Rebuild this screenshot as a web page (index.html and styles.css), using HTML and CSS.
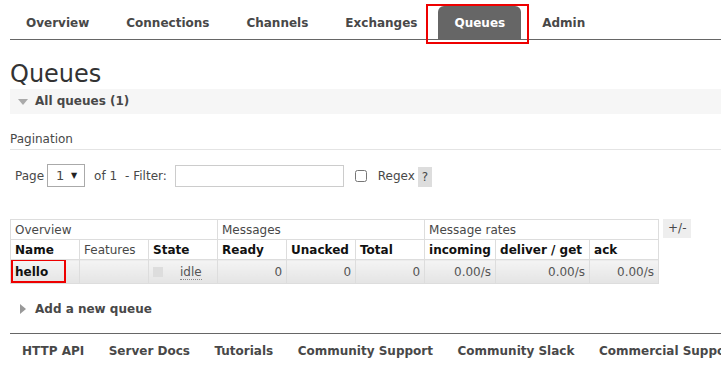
FILE: index.html
```html
<!DOCTYPE html>
<html lang="en">
<head>
  <meta charset="UTF-8">
  <title>RabbitMQ Management</title>
  <link rel="stylesheet" href="styles.css">
</head>
<body>

  <ul class="tabs">
    <li><a href="#">Overview</a></li>
    <li><a href="#">Connections</a></li>
    <li><a href="#">Channels</a></li>
    <li><a href="#">Exchanges</a></li>
    <li class="selected"><a href="#">Queues</a></li>
    <li><a href="#">Admin</a></li>
  </ul>

  <h1>Queues</h1>

  <div class="section open">
    <h2>All queues (1)</h2>
  </div>

  <div class="pagination">
    <h3>Pagination</h3>
    <div class="filter">
      <span>Page</span>
      <span class="select">1 <i>&#9660;</i></span>
      <span class="of">of 1</span>
      <span>- Filter:</span>
      <input type="text" class="filter-input">
      <input type="checkbox" class="regex-box">
      <span>Regex</span>
      <span class="help">?</span>
    </div>
  </div>

  <div class="list-wrap">
    <table class="list">
      <colgroup>
        <col class="c69"><col class="c69"><col class="c69">
        <col class="c69"><col class="c69"><col class="c69">
        <col class="c71"><col class="c94"><col class="c69">
      </colgroup>
      <thead>
        <tr class="group">
          <th colspan="3">Overview</th>
          <th colspan="3">Messages</th>
          <th colspan="3">Message rates</th>
        </tr>
        <tr>
          <th>Name</th>
          <th class="plain">Features</th>
          <th>State</th>
          <th>Ready</th>
          <th>Unacked</th>
          <th>Total</th>
          <th>incoming</th>
          <th>deliver / get</th>
          <th>ack</th>
        </tr>
      </thead>
      <tbody>
        <tr>
          <td class="name"><span class="mark">hello</span></td>
          <td></td>
          <td class="state"><span class="dot"></span><abbr>idle</abbr></td>
          <td class="r">0</td>
          <td class="r">0</td>
          <td class="r">0</td>
          <td class="r">0.00/s</td>
          <td class="r">0.00/s</td>
          <td class="r">0.00/s</td>
        </tr>
      </tbody>
    </table>
    <span class="toggle">+/-</span>
  </div>

  <div class="section closed">
    <h2>Add a new queue</h2>
  </div>

  <ul class="footer">
    <li><a href="#">HTTP API</a></li>
    <li><a href="#">Server Docs</a></li>
    <li><a href="#">Tutorials</a></li>
    <li><a href="#">Community Support</a></li>
    <li><a href="#">Community Slack</a></li>
    <li><a href="#">Commercial Support</a></li>
  </ul>

</body>
</html>
```

FILE: styles.css
```css
body {
  margin: 0;
  padding-left: 10px;
  font-family: "DejaVu Sans", Verdana, sans-serif;
  font-size: 12px;
  color: #484848;
  background: #fff;
  overflow: hidden;
}
a {
  color: #484848;
  text-decoration: none;
}
.tabs {
  display: flex;
  list-style: none;
  margin: 0;
  padding: 6px 0 0 0;
  border-bottom: 1px solid #666;
  white-space: nowrap;
}
.tabs li {
  margin-right: 5px;
}
.tabs a {
  display: block;
  height: 31px;
  line-height: 31px;
  padding: 2px 16px 0 16px;
  font-weight: bold;
  font-size: 12px;
}
.tabs .selected {
  position: relative;
}
.tabs .selected a {
  background: #666;
  color: #fff;
  border-radius: 6px 6px 0 0;
}
.tabs .selected::after {
  content: "";
  position: absolute;
  left: -12px;
  right: -8px;
  top: -2px;
  bottom: -5px;
  border: 2px solid #e00;
}
h1 {
  margin: 20px 0 0 0;
  font-size: 24px;
  font-weight: normal;
  line-height: 29px;
  color: #333;
}
.section h2 {
  margin: 0;
  font-size: 12px;
  font-weight: bold;
  line-height: 25px;
  padding-left: 25px;
  position: relative;
}
.section.open {
  background: #f6f6f6;
}
.section h2::before {
  content: "";
  position: absolute;
  top: 9px;
  left: 8px;
  border: 5px solid transparent;
}
.section.open h2::before {
  border-top: 6px solid #aaa;
  border-bottom: 0;
  top: 10px;
}
.section.closed h2::before {
  border-left: 6px solid #999;
  border-right: 0;
  left: 10px;
  top: 7px;
}
.pagination h3 {
  margin: 17px 0 0 0;
  font-size: 12px;
  font-weight: normal;
  line-height: 16px;
  padding-bottom: 2px;
  border-bottom: 1px solid #e4e4e4;
}
.filter {
  display: flex;
  align-items: center;
  margin-top: 14px;
  padding-left: 5px;
}
.select {
  display: inline-flex;
  align-items: center;
  justify-content: space-between;
  box-sizing: border-box;
  width: 38px;
  height: 23px;
  margin: 0 9px 0 3px;
  padding: 0 7px 0 8px;
  border: 1px solid #aaa;
  background: #fff;
  font-size: 13px;
}
.select i {
  font-style: normal;
  font-size: 8px;
  color: #222;
}
.of {
  margin: 0 8px 0 0;
}
.filter-input {
  box-sizing: border-box;
  width: 169px;
  height: 22px;
  margin: 0 10px 0 8px;
  border: 1px solid #ccc;
}
.regex-box {
  width: 12px;
  height: 12px;
  margin: 0 11px 0 1px;
}
.help {
  margin-left: 3px;
  background: #ddd;
  padding: 3px 4px 3px 4px;
  margin-top: 3px;
}
.list-wrap {
  display: flex;
  align-items: flex-start;
  margin-top: 32px;
}
.list {
  border-collapse: collapse;
  table-layout: fixed;
  width: 648px;
}
.c69 { width: 69px; }
.c71 { width: 71px; }
.c94 { width: 94px; }
.list th,
.list td {
  border: 1px solid #ddd;
  padding: 0 4px;
  height: 19px;
  text-align: left;
  white-space: nowrap;
  overflow: hidden;
}
.list th {
  font-weight: bold;
  color: #111;
  font-size: 12px;
}
.list .group th,
.list th.plain {
  font-weight: normal;
  color: #484848;
}
.list td {
  height: 23px;
  background: linear-gradient(#f4f4f4, #e4e4e4);
  color: #555;
}
.list td.r {
  text-align: right;
}
.list td.name {
  position: relative;
  font-weight: bold;
  color: #111;
}
.mark::after {
  content: "";
  position: absolute;
  left: 0;
  top: -1px;
  width: 51px;
  height: 20px;
  border: 2px solid #e00;
}
.state .dot {
  display: inline-block;
  width: 10px;
  height: 10px;
  background: #ddd;
  vertical-align: middle;
  margin-right: 17px;
}
.state abbr {
  text-decoration: none;
  border-bottom: 1px dotted #888;
}
.toggle {
  margin-left: 4px;
  background: #eee;
  padding: 2px 5px 3px 5px;
  font-size: 12px;
}
.section.closed {
  margin-top: 13px;
}
.footer {
  display: flex;
  list-style: none;
  margin: 11px 0 0 0;
  padding: 9px 0 0 12px;
  border-top: 1px solid #666;
  white-space: nowrap;
}
.footer li {
  margin-right: 24.5px;
}
.footer a {
  font-weight: bold;
  line-height: 16px;
}
```
